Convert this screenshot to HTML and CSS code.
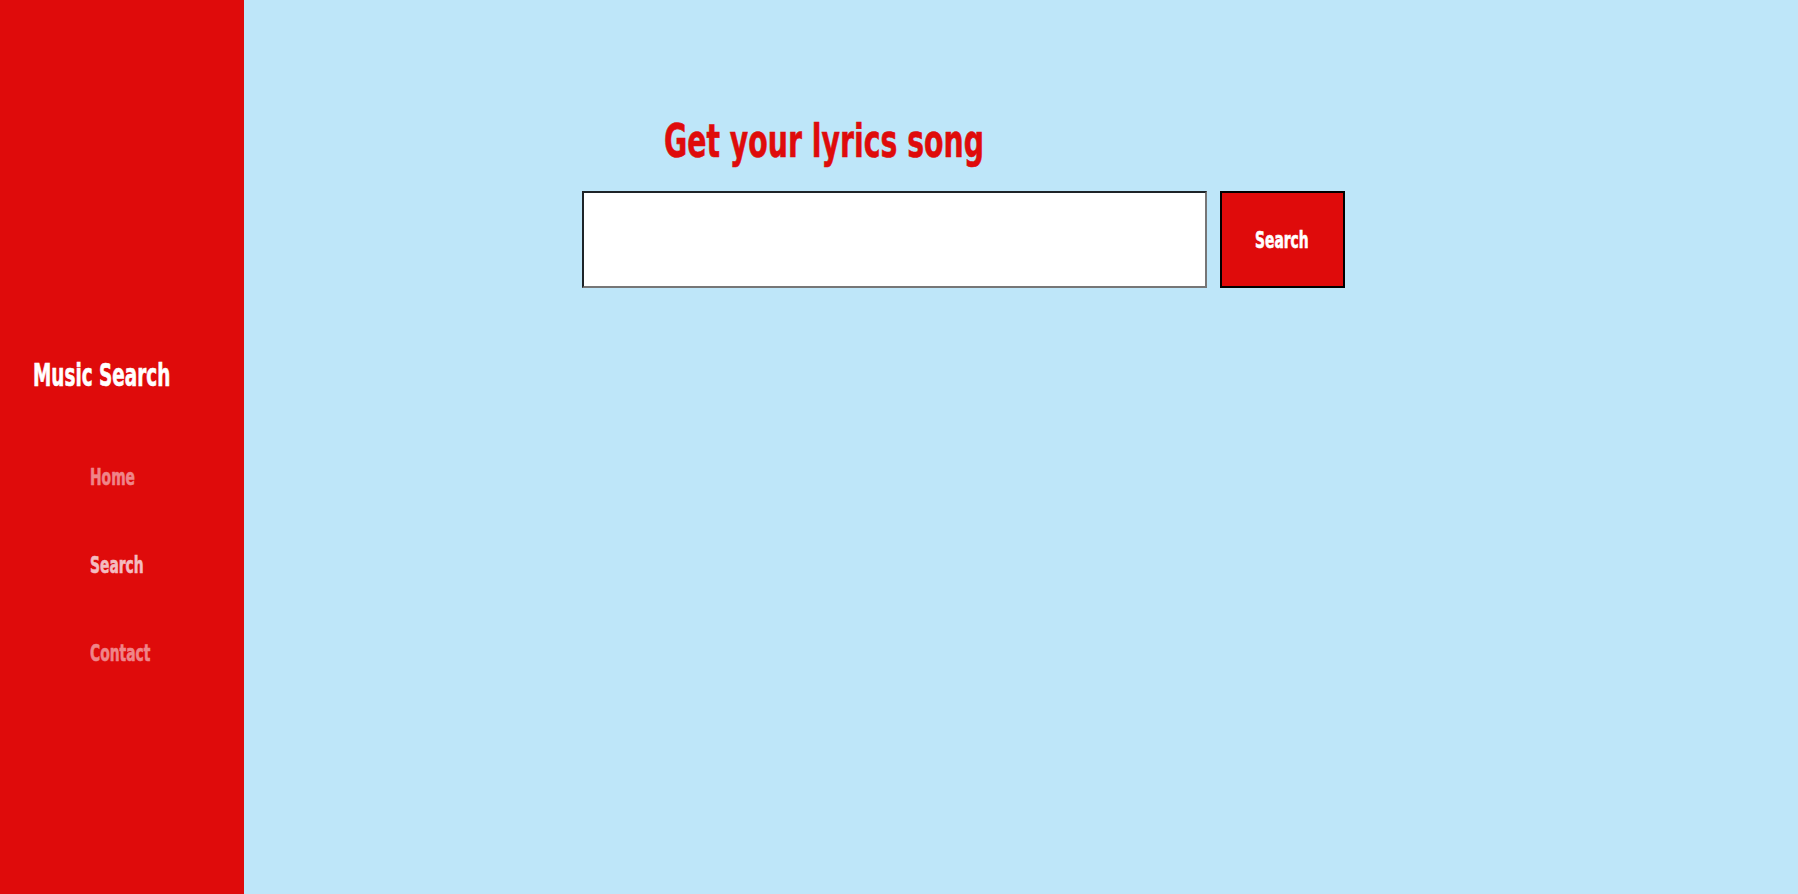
FILE: index.html
```html
<!DOCTYPE html>
<html lang="en">
<head>
<meta charset="utf-8">
<title>Music Search</title>
<link rel="stylesheet" href="styles.css">
</head>
<body>
<div class="app">
  <aside class="sidebar">
    <div class="brand"><span class="narrow brand-text">Music Search</span></div>
    <nav class="nav">
      <a class="nav-link" href="#"><span class="narrow">Home</span></a>
      <a class="nav-link active" href="#"><span class="narrow">Search</span></a>
      <a class="nav-link" href="#"><span class="narrow">Contact</span></a>
    </nav>
  </aside>
  <main class="main">
    <div class="content">
      <h1 class="title"><span class="narrow">Get your lyrics song</span></h1>
      <form class="search-form">
        <input class="search-input" type="text">
        <button class="search-btn" type="button"><span class="narrow btn-text">Search</span></button>
      </form>
    </div>
  </main>
</div>
</body>
</html>
```
FILE: styles.css
```css
html, body {
  margin: 0;
  padding: 0;
  height: 100%;
}
body {
  font-family: "DejaVu Sans Condensed", "DejaVu Sans", sans-serif;
  font-weight: 700;
  background: #bee6f9;
}
.narrow {
  display: inline-block;
  transform: scaleX(0.67);
  transform-origin: left center;
  white-space: nowrap;
  -webkit-text-stroke: 0.6px currentColor;
}
.app {
  display: flex;
  height: 894px;
}
.sidebar {
  width: 244px;
  flex: 0 0 244px;
  background: #df0b0b;
  display: flex;
  flex-direction: column;
  padding-top: 355px;
  box-sizing: border-box;
}
.brand {
  color: #ffffff;
  font-size: 32px;
  line-height: 40px;
  padding-left: 33px;
}
.brand-text {
  transform: scaleX(0.64);
}
.nav {
  display: flex;
  flex-direction: column;
  align-items: flex-start;
  padding-left: 90px;
  margin-top: 68px;
  gap: 60px;
}
.nav-link {
  color: #ef8589;
  text-decoration: none;
  font-size: 23px;
  line-height: 28px;
}
.nav-link.active {
  color: #f4bcc0;
}
.main {
  flex: 1;
}
.content {
  margin-left: 338px;
  padding-top: 114px;
}
.title {
  margin: 0 0 23px 82px;
  color: #df0b0b;
  font-size: 47px;
  line-height: 54px;
  font-weight: 700;
}
.search-form {
  display: flex;
  gap: 13px;
  margin: 0;
}
.search-input {
  width: 625px;
  height: 97px;
  box-sizing: border-box;
  border: 2px solid #767676;
  border-top-color: #1e2428;
  border-left-color: #1e2428;
  background: #ffffff;
  margin: 0;
  padding: 0 8px;
  font-size: 20px;
}
.search-btn {
  width: 125px;
  height: 97px;
  box-sizing: border-box;
  background: #df0b0b;
  border: 2px solid #000000;
  color: #ffffff;
  font-family: inherit;
  font-weight: 700;
  font-size: 23px;
  margin: 0;
  padding: 0 0 0 33px;
  text-align: left;
  cursor: pointer;
}
```
